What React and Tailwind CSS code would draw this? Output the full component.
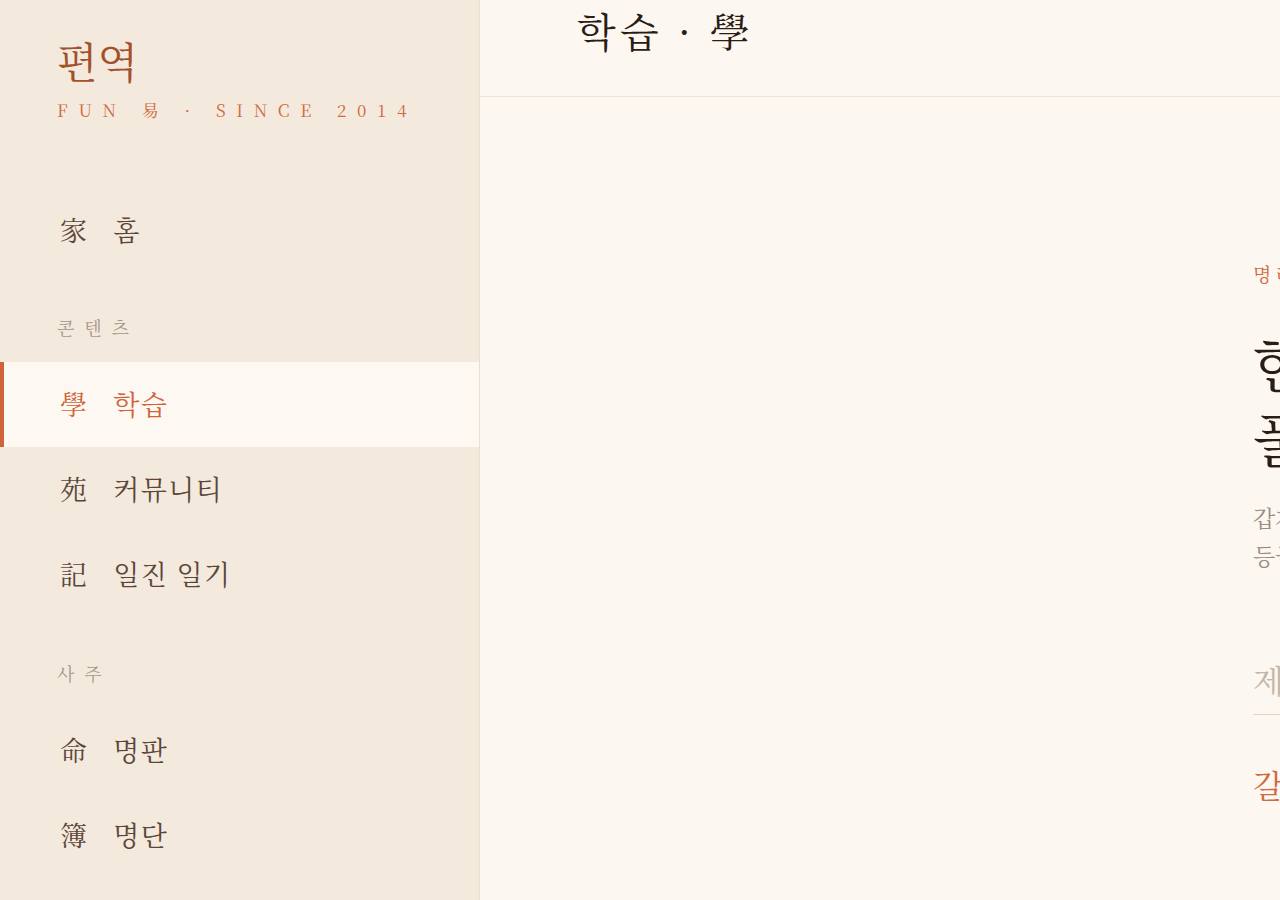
import React from "react";

const serif = { fontFamily: '"Noto Serif CJK KR", "Liberation Serif", "Noto Sans CJK KR", serif' };

function NavItem({ han, label, active }) {
  return (
    <div
      className={
        "flex h-[85px] items-center gap-[25px] text-[27px] tracking-[0.05em] " +
        (active
          ? "border-l-4 border-[#cf643b] bg-[#fdf8f2] pl-[56px] text-[#cf643b]"
          : "pl-[60px] text-[#5c463a]")
      }
    >
      <span>{han}</span>
      <span>{label}</span>
    </div>
  );
}

function Section({ children, tall }) {
  return (
    <div
      className={
        "flex flex-col justify-end pb-[25px] pl-[57px] text-[18px] leading-[20px] tracking-[0.55em] text-[#a8978a] " +
        (tall ? "h-[91px]" : "h-[89px]")
      }
    >
      {children}
    </div>
  );
}

export default function App() {
  return (
    <div className="flex h-[900px] w-[1280px] overflow-hidden bg-[#fcf7f0]" style={serif}>
      <aside className="flex w-[480px] shrink-0 flex-col border-r border-[#eadfcf] bg-[#f3e9dc]">
        <div className="pl-[57px] pt-[30px]">
          <div className="text-[42px] leading-[60px] text-[#a3512c]">편역</div>
          <div className="mt-[10px] text-[17px] leading-[20px] tracking-[0.63em] text-[#d06a40]">
            FUN 易 · SINCE 2014
          </div>
        </div>
        <div className="mt-[68px]">
          <NavItem han="家" label="홈" />
        </div>
        <Section>콘텐츠</Section>
        <NavItem han="學" label="학습" active />
        <NavItem han="苑" label="커뮤니티" />
        <NavItem han="記" label="일진 일기" />
        <Section tall>사주</Section>
        <NavItem han="命" label="명판" />
        <NavItem han="簿" label="명단" />
      </aside>
      <main className="flex min-w-0 flex-1 flex-col overflow-hidden">
        <header className="h-[97px] shrink-0 border-b border-[#efe3d2] pl-[97px]">
          <h1 className="mt-[4px] whitespace-nowrap text-[40px] leading-[52px] tracking-[0.11em] text-[#2a1d16]">
            학습 · 學
          </h1>
        </header>
        <div className="flex flex-col whitespace-nowrap pl-[773px] pt-[164px]">
          <div className="text-[19px] leading-[26px] tracking-[0.2em] text-[#d06a40]">명리학 입문 · 命理</div>
          <div className="mt-[38px] text-[58px] leading-[75px] text-[#2a1d16]">
            <div>한 사람의 사주를</div>
            <div>풀어보는 여정</div>
          </div>
          <div className="mt-[24px] text-[23px] leading-[38px] text-[#9c8b7f]">
            <div>갑자부터 계해까지 천간과 지지를 배우고</div>
            <div>등급별로 차근차근 익혀보세요</div>
          </div>
          <div className="mt-[82px] border-b border-[#e3d6c5] pb-[13px] text-[32px] leading-[44px] text-[#c4b6a8]">
            제목을 입력하세요
          </div>
          <div className="mt-[47px] text-[32px] leading-[44px] text-[#d06a40]">갈래 보기</div>
        </div>
      </main>
    </div>
  );
}
